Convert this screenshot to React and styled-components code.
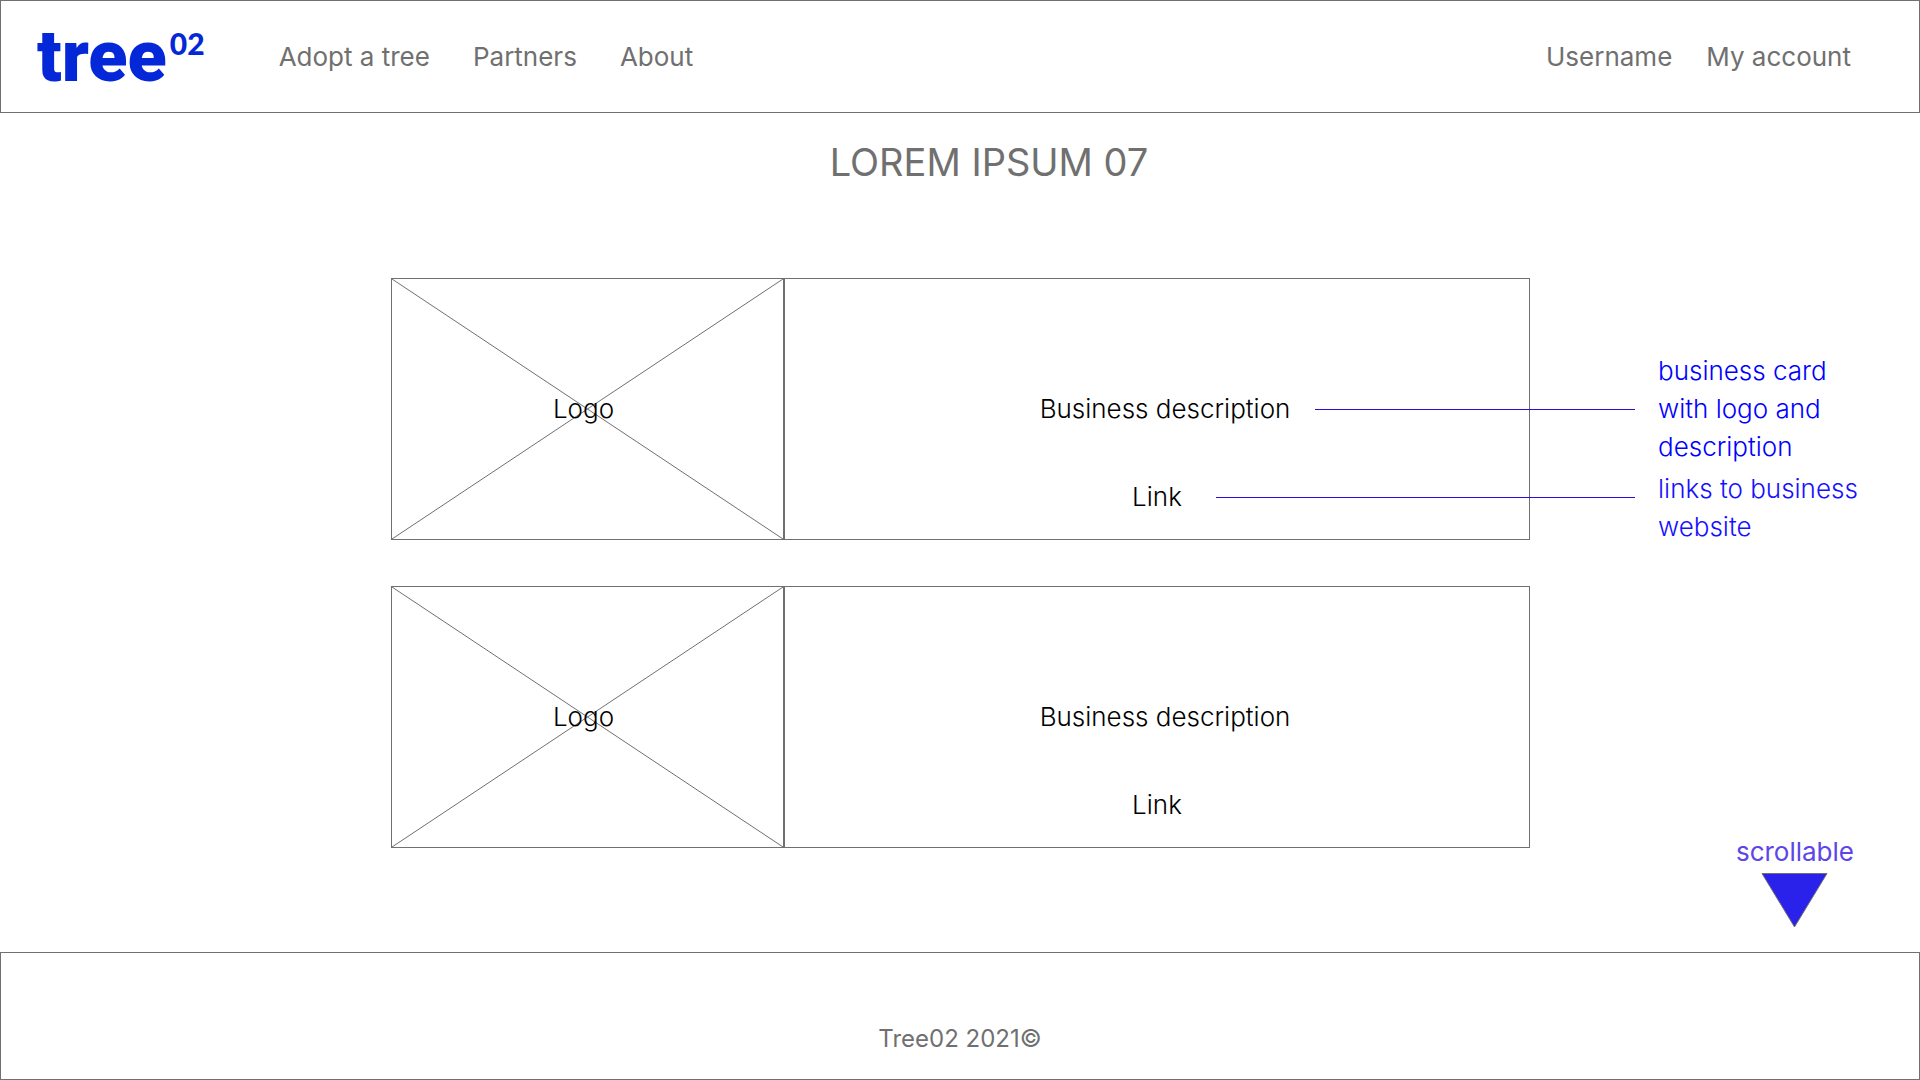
import React from 'react';
import styled, { createGlobalStyle } from 'styled-components';

const GlobalStyle = createGlobalStyle`
  *, *::before, *::after { box-sizing: border-box; }
  body {
    margin: 0;
    background: #fff;
    color: #707070;
    font-family: Inter, "Open Sans", sans-serif;
    font-size: 26px;
    font-weight: 400;
    line-height: 38px;
  }
  a { color: inherit; text-decoration: none; }
`;

const Page = styled.div`
  display: flex;
  flex-direction: column;
  min-height: 100vh;
`;

const Header = styled.header`
  display: flex;
  align-items: center;
  padding: 20px 68px 20px 36px;
  border: 1px solid #707070;
`;

const Brand = styled.a`
  display: flex;
  align-items: flex-start;
  gap: 3px;
  margin-right: 74px;
  color: #0428d8;
`;

const BrandName = styled.span`
  font-family: Roboto, sans-serif;
  font-size: 72px;
  font-weight: 900;
  line-height: 71px;
`;

const BrandNumber = styled.span`
  padding-top: 4px;
  font-family: Lato, sans-serif;
  font-size: 30px;
  font-weight: 900;
  line-height: 36px;
`;

const Nav = styled.nav`
  display: flex;
  gap: ${({ $gap }) => $gap}px;
`;

const AccountNav = styled(Nav)`
  margin-left: auto;
`;

const Title = styled.h1`
  margin: 0;
  padding: 25px 0 92px 58px;
  font-size: 38px;
  font-weight: 400;
  line-height: 48px;
  text-align: center;
`;

const Content = styled.main`
  flex: 1;
  display: grid;
  grid-template-columns: 391fr 1139fr 390fr;
`;

const CardList = styled.div`
  grid-column: 2;
  display: flex;
  flex-direction: column;
  gap: 46px;
`;

const Card = styled.article`
  display: grid;
  grid-template-columns: 393px 1fr;
  min-height: 262px;
  color: #000;
  font-weight: 300;
`;

const LogoBox = styled.div`
  display: grid;
  place-items: center;
  border: 1px solid #707070;
`;

const Cross = styled.svg`
  grid-area: 1 / 1;
  width: 100%;
  height: 100%;
  stroke: #707070;
`;

const LogoLabel = styled.span`
  grid-area: 1 / 1;
  padding-right: 8px;
`;

const Details = styled.div`
  display: flex;
  flex-direction: column;
  align-items: center;
  gap: 50px;
  padding-top: 111px;
  border: 1px solid #707070;
`;

const Description = styled.p`
  margin: 0;
  padding-left: 16px;
`;

const Aside = styled.aside`
  display: flex;
  flex-direction: column;
  padding: 74px 0 24px 128px;
`;

const Note = styled.p`
  position: relative;
  width: 210px;
  margin: 0 0 4px;
  color: ${({ $color }) => $color};
  font-weight: 300;

  &::before {
    content: '';
    position: absolute;
    top: ${({ $lineTop }) => $lineTop}px;
    right: calc(100% + 23px);
    width: ${({ $lineWidth }) => $lineWidth}px;
    border-top: 1px solid #2a0be0;
  }
`;

const ScrollHint = styled.div`
  display: flex;
  flex-direction: column;
  align-items: center;
  align-self: flex-end;
  gap: 2px;
  margin: auto 66px 0 0;
  color: #5d45e8;
`;

const Arrow = styled.svg`
  display: block;
  width: 67px;
  height: 55px;
`;

const Footer = styled.footer`
  padding: 67px 0 21px;
  border: 1px solid #707070;
  font-size: 24px;
  text-align: center;
`;

function BusinessCard() {
  return (
    <Card>
      <LogoBox>
        <Cross viewBox="0 0 391 260" preserveAspectRatio="none" aria-hidden="true">
          <path d="M0 0L391 260M391 0L0 260" fill="none" />
        </Cross>
        <LogoLabel>Logo</LogoLabel>
      </LogoBox>
      <Details>
        <Description>Business description</Description>
        <a href="#business">Link</a>
      </Details>
    </Card>
  );
}

export default function App() {
  return (
    <>
      <GlobalStyle />
      <Page>
        <Header>
          <Brand href="#home">
            <BrandName>tree</BrandName>
            <BrandNumber>02</BrandNumber>
          </Brand>
          <Nav $gap={43}>
            <a href="#adopt">Adopt a tree</a>
            <a href="#partners">Partners</a>
            <a href="#about">About</a>
          </Nav>
          <AccountNav $gap={34}>
            <a href="#user">Username</a>
            <a href="#account">My account</a>
          </AccountNav>
        </Header>
        <Title>LOREM IPSUM 07</Title>
        <Content>
          <CardList>
            <BusinessCard />
            <BusinessCard />
          </CardList>
          <Aside>
            <Note $color="#0000ff" $lineTop={57} $lineWidth={320}>
              business card with logo and description
            </Note>
            <Note $color="#1710ff" $lineTop={27} $lineWidth={419}>
              links to business website
            </Note>
            <ScrollHint>
              scrollable
              <Arrow viewBox="0 0 67 55" aria-hidden="true">
                <path d="M1 .5H66L33.500 54Z" fill="#2a22ea" stroke="#707070" />
              </Arrow>
            </ScrollHint>
          </Aside>
        </Content>
        <Footer>Tree02 2021©</Footer>
      </Page>
    </>
  );
}
